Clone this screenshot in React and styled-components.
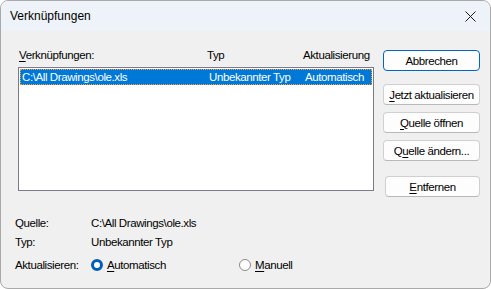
import React from "react";
import styled, { createGlobalStyle } from "styled-components";

const Global = createGlobalStyle`
  html, body { margin: 0; padding: 0; background: #ffffff; }
  body {
    font-family: "Liberation Sans", Arial, sans-serif;
    font-size: 11.5px;
    letter-spacing: -0.4px;
    color: #000;
  }
`;

const Window = styled.div`
  width: 491px;
  height: 289px;
  box-sizing: border-box;
  border: 1px solid #a9a9a9;
  border-radius: 8px;
  overflow: hidden;
  background: #f0f0f0;
  display: flex;
  flex-direction: column;
`;

const TitleBar = styled.div`
  height: 30px;
  background: #eef3f9;
  display: flex;
  align-items: center;
  justify-content: space-between;
  padding: 0 12px 0 9px;
  font-size: 12px;
  letter-spacing: 0;
`;

const Close = styled.button`
  border: 0;
  background: none;
  padding: 0;
  width: 16px;
  height: 16px;
  display: flex;
  align-items: center;
  justify-content: center;
`;

const Body = styled.div`
  flex: 1;
  display: flex;
  flex-direction: column;
  padding: 12px 10px 0 14px;
`;

const Top = styled.div`
  display: flex;
  gap: 9px;
`;

const ListArea = styled.div`
  width: 356px;
  margin-left: 3px;
`;

const Header = styled.div`
  display: grid;
  grid-template-columns: 188px 96px 1fr;
  height: 24px;
  align-items: center;
  padding-left: 1px;
`;

const List = styled.div`
  height: 120px;
  border: 1px solid #7a7a8a;
  background: #fff;
  padding: 1px;
`;

const Row = styled.div`
  display: grid;
  grid-template-columns: 187px 96px 1fr;
  height: 16px;
  align-items: center;
  padding-left: 2px;
  background: ${p => (p.$selected ? "#0078d7" : "transparent")};
  color: ${p => (p.$selected ? "#fff" : "#000")};
  outline: ${p => (p.$selected ? "1px dotted #f0a030" : "none")};
  outline-offset: -1px;
  white-space: nowrap;
`;

const Buttons = styled.div`
  display: flex;
  flex-direction: column;
  width: 97px;
  padding-top: 7px;
`;

const Btn = styled.button`
  height: 21px;
  box-sizing: border-box;
  margin-bottom: ${p => p.$gap || 7}px;
  margin-left: ${p => p.$indent || 0}px;
  font-family: inherit;
  font-size: 11.5px;
  letter-spacing: -0.4px;
  color: #000;
  background: #fdfdfd;
  border: 1px solid ${p => (p.$default ? "#0067c0" : "#d0d0d0")};
  border-bottom-color: ${p => (p.$default ? "#0067c0" : "#b8b8b8")};
  border-radius: 4px;
  padding: 0;
  white-space: nowrap;
`;

const Info = styled.div`
  display: grid;
  grid-template-columns: 76px 148px 1fr;
  row-gap: 5px;
  margin-top: 12px;
  align-items: center;
`;

const Label = styled.div`
  height: 14px;
  line-height: 14px;
`;

const Radio = styled.label`
  display: flex;
  align-items: center;
  gap: 4px;
  height: 22px;
`;

const Dot = styled.span`
  width: 12px;
  height: 12px;
  box-sizing: border-box;
  border-radius: 50%;
  border: ${p => (p.$on ? "3.5px solid #005fb8" : "1px solid #8a8a8a")};
  background: #fff;
`;

const U = styled.span`
  text-decoration: underline;
  text-underline-offset: 2px;
`;

export default function App() {
  return (
    <>
      <Global />
      <Window>
        <TitleBar>
          <span>Verknüpfungen</span>
          <Close aria-label="Schließen">
            <svg width="11" height="11" viewBox="0 0 11 11">
              <path d="M0.5 0.5 L10.5 10.5 M10.5 0.5 L0.5 10.5" stroke="#1a1a1a" strokeWidth="1" />
            </svg>
          </Close>
        </TitleBar>
        <Body>
          <Top>
            <ListArea>
              <Header>
                <span><U>V</U>erknüpfungen:</span>
                <span>Typ</span>
                <span>Aktualisierung</span>
              </Header>
              <List>
                <Row $selected>
                  <span>C:\All Drawings\ole.xls</span>
                  <span>Unbekannter Typ</span>
                  <span>Automatisch</span>
                </Row>
              </List>
            </ListArea>
            <Buttons>
              <Btn $default $gap={13}>Abbrechen</Btn>
              <Btn><U>J</U>etzt aktualisieren</Btn>
              <Btn><U>Q</U>uelle öffnen</Btn>
              <Btn $gap={15}>Q<U>u</U>elle ändern...</Btn>
              <Btn $indent={2}><U>E</U>ntfernen</Btn>
            </Buttons>
          </Top>
          <Info>
            <Label>Quelle:</Label>
            <Label>C:\All Drawings\ole.xls</Label>
            <span />
            <Label>Typ:</Label>
            <Label>Unbekannter Typ</Label>
            <span />
            <Label>Aktualisieren:</Label>
            <Radio><Dot $on /><span><U>A</U>utomatisch</span></Radio>
            <Radio><Dot /><span><U>M</U>anuell</span></Radio>
          </Info>
        </Body>
      </Window>
    </>
  );
}
